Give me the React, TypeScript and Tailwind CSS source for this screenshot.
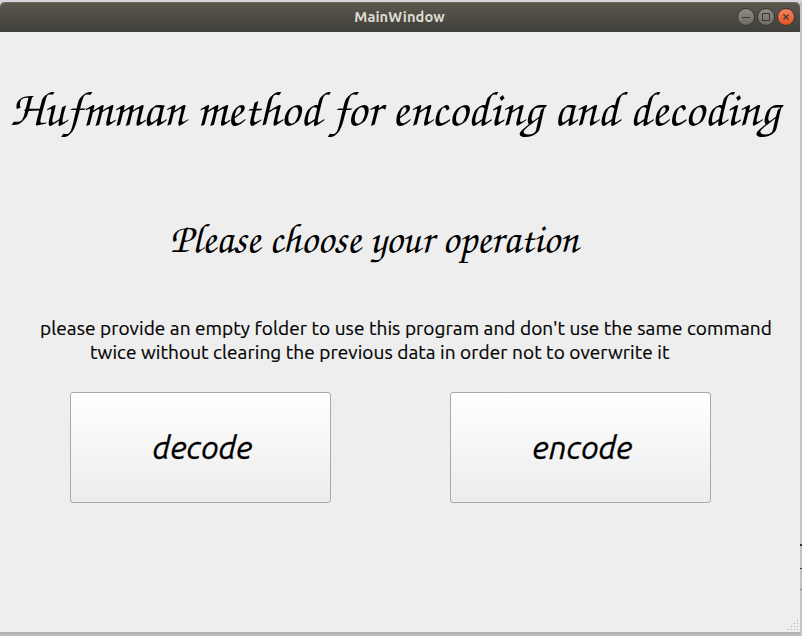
import React from "react";

const GRIP = [
  [9, 0],
  [6, 3], [9, 3],
  [3, 6], [6, 6], [9, 6],
  [0, 9], [3, 9], [6, 9], [9, 9],
];

function ControlButton({ tone, children }: { tone: string; children: React.ReactNode }) {
  return (
    <span className={`flex size-[18px] items-center justify-center rounded-full border border-[#36352f] ${tone}`}>
      <svg width="16" height="16" viewBox="0 0 16 16" fill="none" stroke="#3b3a35" shapeRendering="crispEdges">
        {children}
      </svg>
    </span>
  );
}

function TitleBar() {
  return (
    <header className="flex h-[30px] items-center rounded-t-[5px] border-t border-[#6b6a60] bg-linear-to-b from-[#5b584e] to-[#403f3a] pr-[5px] pb-px">
      <span className="w-[62px]" />
      <h1 className="flex-1 text-center font-['Ubuntu','Noto_Sans',sans-serif] text-[14.67px] leading-[20px] font-bold tracking-[0.08px] text-[#dfdbd2]">
        MainWindow
      </h1>
      <div className="flex gap-[2px]">
        <ControlButton tone="bg-linear-to-b from-[#8e8c84] to-[#6c6b64]">
          <path d="M4 8.5h8" />
        </ControlButton>
        <ControlButton tone="bg-linear-to-b from-[#8e8c84] to-[#6c6b64]">
          <path d="M4.5 4.5h7v7h-7z" />
        </ControlButton>
        <ControlButton tone="bg-linear-to-b from-[#f5815a] to-[#e4511f]">
          <path d="M5.5 5.5l5 5M10.5 5.5l-5 5" strokeWidth="1.4" shapeRendering="auto" />
        </ControlButton>
      </div>
    </header>
  );
}

function PushButton({ label }: { label: string }) {
  return (
    <button className="flex h-[111px] w-[261px] items-center justify-center rounded-[3px] border border-[#a9a9a9] bg-linear-to-b from-white to-[#ececec] pb-[2px] pl-[4px] font-['Ubuntu','Noto_Sans',sans-serif] text-[32px] leading-[40px] italic [-webkit-text-stroke:0.3px_black]">
      {label}
    </button>
  );
}

export default function App() {
  return (
    <div className="flex h-[636px] w-[802px] overflow-hidden bg-linear-to-b from-[#d6d6da] to-[#bcbcbc] pt-[2px] text-black">
      <div className="flex w-[800px] flex-col">
        <TitleBar />
        <main className="relative flex h-[600px] flex-col bg-[#eeeeee] whitespace-nowrap">
          <h2 className="mt-[45px] ml-[10px] font-['URW_Chancery_L','TeX_Gyre_Chorus','Apple_Chancery','Monotype_Corsiva','ITC_Zapf_Chancery',cursive] text-[49px] leading-[60px] tracking-[0.03px]">
            Hufmman method for encoding and decoding
          </h2>
          <h3 className="mt-[75px] ml-[170px] font-['URW_Chancery_L','TeX_Gyre_Chorus','Apple_Chancery','Monotype_Corsiva','ITC_Zapf_Chancery',cursive] text-[41px] leading-[50px]">
            Please choose your operation
          </h3>
          <div className="mt-[54px] ml-[40px] font-['Ubuntu','Noto_Sans',sans-serif] text-[19px] leading-[24px] tracking-[0.08px] [-webkit-text-stroke:0.2px_black]">
            <p>please provide an empty folder to use this program and don't use the same command</p>
            <p className="ml-[50px]">twice without clearing the previous data in order not to overwrite it</p>
          </div>
          <div className="mt-[28px] ml-[70px] flex gap-[119px]">
            <PushButton label="decode" />
            <PushButton label="encode" />
          </div>
          <svg className="absolute right-px bottom-px" width="11" height="11" viewBox="0 0 11 11" fill="#b4b4b4">
            {GRIP.map(([x, y]) => (
              <rect key={`${x}-${y}`} x={x} y={y} width="1" height="1" />
            ))}
          </svg>
        </main>
        <footer className="h-[4px] bg-linear-to-b from-[#adadad] to-[#c0c0c0]" />
      </div>
      <aside className="flex w-[2px] flex-col bg-[#c2c2c2]">
        <span className="mt-[542px] h-[2px] bg-[#303030]" />
        <span className="mt-[22px] h-px bg-[#303030]" />
        <span className="mt-[20px] h-px bg-[#858585]" />
      </aside>
    </div>
  );
}
